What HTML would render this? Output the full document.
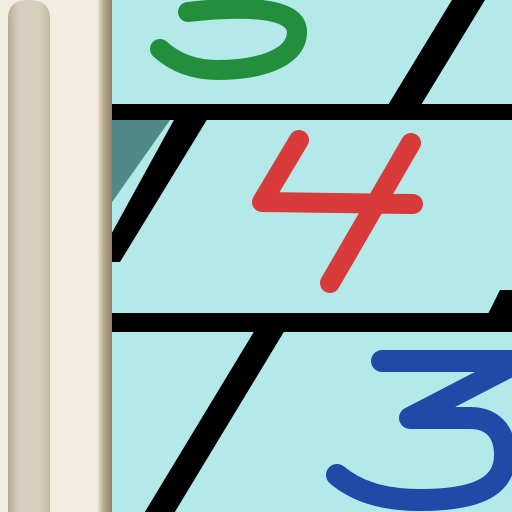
<!DOCTYPE html>
<html><head><style>html,body{margin:0;padding:0;width:512px;height:512px;overflow:hidden;background:#b3e9e9}</style></head>
<body>
<svg width="512" height="512" viewBox="0 0 512 512" xmlns="http://www.w3.org/2000/svg">
<defs>
<linearGradient id="edge" x1="0" x2="1"><stop offset="0" stop-color="#e8e2d2"/><stop offset="0.4" stop-color="#b8ab8e"/><stop offset="1" stop-color="#8f826a"/></linearGradient>
<linearGradient id="pill" x1="0" x2="1"><stop offset="0" stop-color="#b5ab94"/><stop offset="0.25" stop-color="#d6cfbd"/><stop offset="0.75" stop-color="#d6cfbd"/><stop offset="1" stop-color="#c2b9a4"/></linearGradient>
</defs>
<rect width="512" height="512" fill="#b3e9e9"/>
<polygon points="110,120 170,120 110,205" fill="#4f8a89"/>
<!-- diagonals -->
<polygon points="455,-5 488,-5 418,110 385,110" fill="#000"/>
<polygon points="175,118 208,118 120,262 108,262 108,240" fill="#000"/>
<polygon points="255,330 285,330 170,520 140,520" fill="#000"/>
<polygon points="500,290 520,290 520,320 485,320" fill="#000"/>
<!-- horizontal bars -->
<rect x="108" y="104" width="404" height="16" fill="#000"/>
<rect x="108" y="313" width="404" height="19" fill="#000"/>
<!-- left strip -->
<rect x="0" y="0" width="112" height="512" fill="#f1ede2"/>
<rect x="98" y="0" width="14" height="512" fill="url(#edge)"/>
<path d="M8,512 V18 Q8,0 29,0 Q50,0 50,18 V512 Z" fill="url(#pill)"/>
<!-- green 3 -->
<path d="M188,12 C240,6 297,6 297,32 C297,60 255,70 218,70 C190,70 172,60 160,49" fill="none" stroke="#238e3c" stroke-width="20" stroke-linecap="round"/>
<!-- red 4 -->
<path d="M299,140 L262,202 L413,204 M411,143 L330,283" fill="none" stroke="#d93a3a" stroke-width="20" stroke-linecap="round" stroke-linejoin="round"/>
<!-- blue 3 -->
<path d="M382,361 L520,361 L410,418 L470,418 C505,418 505,450 505,455 C505,490 470,500 420,500 C380,500 355,490 337,475" fill="none" stroke="#1f4aa8" stroke-width="22" stroke-linecap="round" stroke-linejoin="round"/>
</svg>
</body></html>
